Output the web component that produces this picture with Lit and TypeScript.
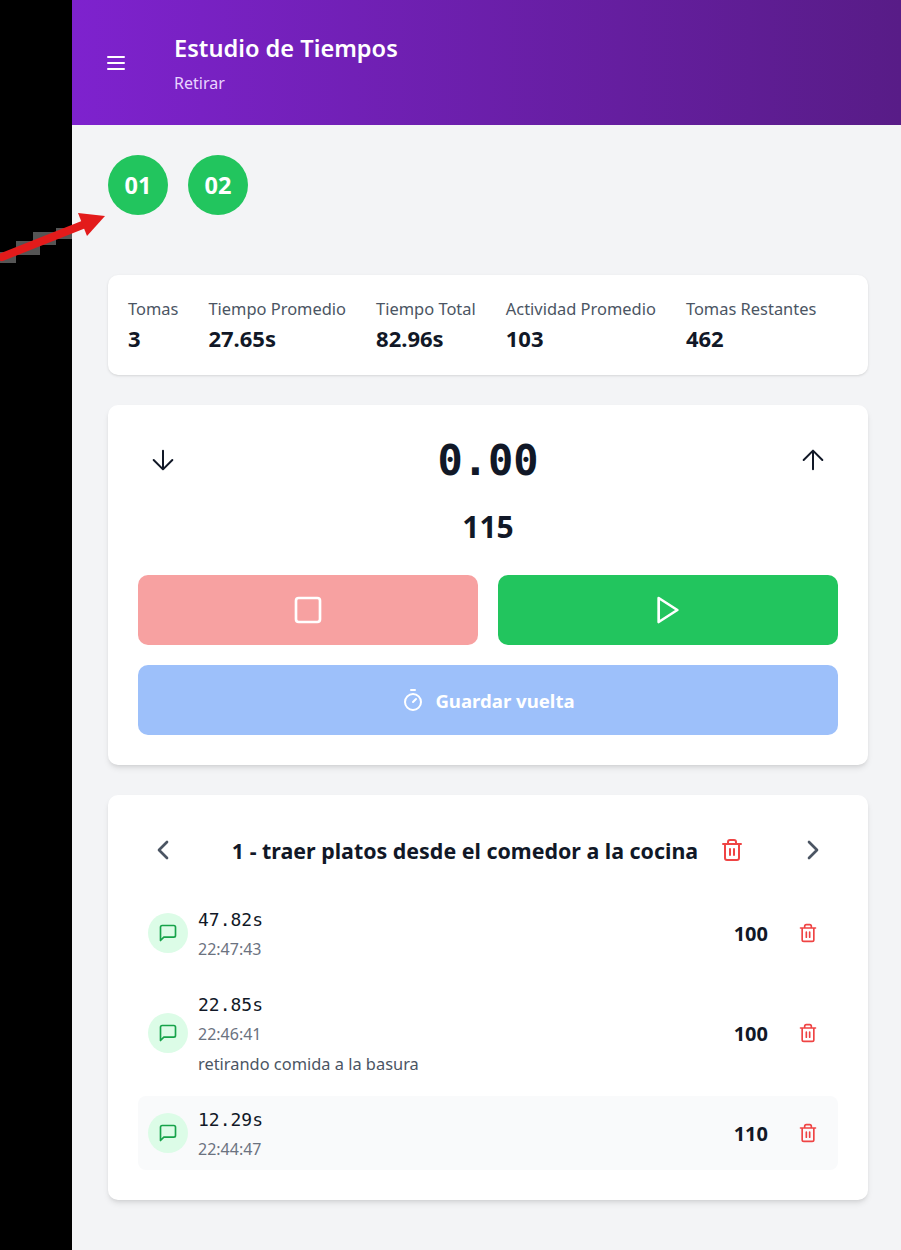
import { LitElement, css, html, svg } from 'lit'
import { customElement, state } from 'lit/decorators.js'

const icons = {
  menu: svg`<path d="M4 6h16M4 12h16M4 18h16" />`,
  down: svg`<path d="M12 5v14M19 12l-7 7-7-7" />`,
  up: svg`<path d="M12 19V5M5 12l7-7 7 7" />`,
  square: svg`<rect x="3" y="3" width="18" height="18" rx="2" />`,
  play: svg`<polygon points="5 3 19 12 5 21 5 3" />`,
  timer: svg`<path d="M10 2h4M12 14l3-3" /><circle cx="12" cy="14" r="8" />`,
  left: svg`<path d="M15 18l-6-6 6-6" />`,
  right: svg`<path d="M9 18l6-6-6-6" />`,
  trash: svg`<path d="M3 6h18M19 6v14c0 1-1 2-2 2H7c-1 0-2-1-2-2V6M8 6V4c0-1 1-2 2-2h4c1 0 2 1 2 2v2M10 11v6M14 11v6" />`,
  message: svg`<path d="M21 15a2 2 0 0 1-2 2H7l-4 4V5a2 2 0 0 1 2-2h14a2 2 0 0 1 2 2z" />`,
}

type IconName = keyof typeof icons

const icon = (name: IconName, size = 24, weight = 2) => html`
  <svg
    width="${size}"
    height="${size}"
    viewBox="0 0 24 24"
    fill="none"
    stroke="currentColor"
    stroke-width="${weight}"
    stroke-linecap="round"
    stroke-linejoin="round"
  >
    ${icons[name]}
  </svg>
`

const stats = [
  { label: 'Tomas', value: '3' },
  { label: 'Tiempo Promedio', value: '27.65s' },
  { label: 'Tiempo Total', value: '82.96s' },
  { label: 'Actividad Promedio', value: '103' },
  { label: 'Tomas Restantes', value: '462' },
]

const laps = [
  { time: '47.82s', clock: '22:47:43', note: '', activity: 100, shaded: false },
  { time: '22.85s', clock: '22:46:41', note: 'retirando comida a la basura', activity: 100, shaded: false },
  { time: '12.29s', clock: '22:44:47', note: '', activity: 110, shaded: true },
]

@customElement('app-root')
export class AppRoot extends LitElement {
  @state() elements = ['01', '02']

  render() {
    return html`
      <div class="shell">
        <div class="rail"></div>
        <div class="page">
          <header class="header">
            <button class="menu">${icon('menu')}</button>
            <div class="heading">
              <h1>Estudio de Tiempos</h1>
              <p>Retirar</p>
            </div>
          </header>

          <main class="content">
            <div class="circles">
              ${this.elements.map((el) => html`<button class="circle">${el}</button>`)}
            </div>

            <section class="card stats">
              ${stats.map(
                (s) => html`
                  <div>
                    <div class="stat-label">${s.label}</div>
                    <div class="stat-value">${s.value}</div>
                  </div>
                `,
              )}
            </section>

            <section class="card timer">
              <div class="timer-top">
                <button class="nav dark">${icon('down', 32, 1.5)}</button>
                <div class="clock">0.00</div>
                <button class="nav dark">${icon('up', 32, 1.5)}</button>
              </div>
              <div class="rating">115</div>
              <div class="actions">
                <button class="action stop">${icon('square', 32)}</button>
                <button class="action start">${icon('play', 32)}</button>
              </div>
              <button class="action save">${icon('timer')}<span>Guardar vuelta</span></button>
            </section>

            <section class="card laps">
              <div class="laps-top">
                <button class="nav">${icon('left', 32)}</button>
                <div class="title">
                  <h2>1 - traer platos desde el comedor a la cocina</h2>
                  <span class="red">${icon('trash')}</span>
                </div>
                <button class="nav">${icon('right', 32)}</button>
              </div>
              <div class="rows">
                ${laps.map(
                  (lap) => html`
                    <div class="row ${lap.shaded ? 'shaded' : ''}">
                      <div class="bubble">${icon('message', 20)}</div>
                      <div class="lap-text">
                        <div class="lap-time">${lap.time}</div>
                        <div class="lap-clock">${lap.clock}</div>
                        ${lap.note ? html`<div class="lap-note">${lap.note}</div>` : ''}
                      </div>
                      <div class="lap-activity">${lap.activity}</div>
                      <button class="lap-delete red">${icon('trash', 20)}</button>
                    </div>
                  `,
                )}
              </div>
            </section>
          </main>
        </div>

        <!-- annotation drawn over the screenshot -->
        <svg class="arrow" width="110" height="70" viewBox="0 0 110 70">
          <path d="M0 52H16V41H33V32H56V28H72V39H56V45H40V55H16V63H0Z" fill="#555" />
          <path d="M2 57L85 24" stroke="#e31b1b" stroke-width="8" stroke-linecap="round" fill="none" />
          <polygon points="78,13 105,16 87,36" fill="#e31b1b" />
        </svg>
      </div>
    `
  }

  static styles = css`
    :host {
      display: block;
      font-family: 'Noto Sans', sans-serif;
      color: #111827;
    }

    * {
      box-sizing: border-box;
    }

    h1,
    h2,
    p {
      margin: 0;
    }

    button {
      border: 0;
      padding: 0;
      background: none;
      color: inherit;
      font: inherit;
      display: flex;
      align-items: center;
      justify-content: center;
    }

    svg {
      display: block;
    }

    .shell {
      position: relative;
      display: grid;
      grid-template-columns: 72px 1fr;
      min-height: 1250px;
    }

    .rail {
      background: #000;
    }

    .page {
      background: #f3f4f6;
      min-width: 0;
    }

    .arrow {
      position: absolute;
      left: 0;
      top: 200px;
    }

    .header {
      height: 125px;
      display: flex;
      align-items: center;
      padding-left: 32px;
      color: #fff;
      background: linear-gradient(to right, #7e22ce, #581c87);
    }

    .menu {
      width: 24px;
      height: 24px;
      margin-right: 46px;
    }

    h1 {
      font-size: 23.6px;
      line-height: 36px;
      font-weight: 600;
    }

    .heading p {
      margin-top: 5px;
      font-size: 16px;
      line-height: 24px;
      color: #e9d5ff;
    }

    .content {
      padding: 30px 33px 50px 36px;
    }

    .circles {
      display: flex;
      gap: 20px;
      margin-bottom: 60px;
    }

    .circle {
      width: 60px;
      height: 60px;
      border-radius: 50%;
      background: #22c55e;
      color: #fff;
      font-size: 23.5px;
      font-weight: 700;
    }

    .card {
      background: #fff;
      border-radius: 10px;
    }

    .stats {
      display: flex;
      gap: 30px;
      padding: 20px 20px 22px;
      margin-bottom: 30px;
      box-shadow: 0 1px 3px rgb(0 0 0 / 0.1), 0 1px 2px -1px rgb(0 0 0 / 0.1);
    }

    .stat-label {
      font-size: 16.45px;
      line-height: 28px;
      color: #4b5563;
    }

    .stat-value {
      font-size: 22px;
      line-height: 30px;
      font-weight: 700;
    }

    .timer,
    .laps {
      padding: 30px;
      box-shadow: 0 4px 6px -1px rgb(0 0 0 / 0.1), 0 2px 4px -2px rgb(0 0 0 / 0.1);
    }

    .timer {
      margin-bottom: 30px;
    }

    .timer-top,
    .laps-top {
      display: flex;
      align-items: center;
      justify-content: space-between;
      height: 50px;
    }

    .nav {
      width: 50px;
      height: 50px;
      color: #4b5563;
    }

    .nav.dark {
      color: #111827;
    }

    .clock {
      font-family: 'DejaVu Sans Mono', monospace;
      font-size: 42px;
      font-weight: 700;
    }

    .rating {
      margin: 24px 0 30px;
      text-align: center;
      font-size: 30px;
      line-height: 36px;
      font-weight: 700;
    }

    .actions {
      display: grid;
      grid-template-columns: 1fr 1fr;
      gap: 20px;
      margin-bottom: 20px;
    }

    .action {
      height: 70px;
      width: 100%;
      border-radius: 10px;
      color: #fff;
    }

    .stop {
      background: #f7a1a1;
    }

    .start {
      background: #22c55e;
    }

    .save {
      gap: 10px;
      background: #9dc0fa;
      font-size: 18.6px;
      font-weight: 700;
    }

    .title {
      display: flex;
      align-items: center;
      gap: 22px;
    }

    h2 {
      margin-top: 2px;
      font-size: 21.4px;
      line-height: 30px;
      font-weight: 700;
    }

    .red {
      color: #ef4444;
    }

    .rows {
      display: flex;
      flex-direction: column;
      gap: 11px;
      margin-top: 21px;
    }

    .row {
      display: flex;
      align-items: center;
      padding: 10px;
      border-radius: 8px;
    }

    .row.shaded {
      background: #f9fafb;
    }

    .bubble {
      width: 40px;
      height: 40px;
      border-radius: 50%;
      display: flex;
      align-items: center;
      justify-content: center;
      background: #dcfce7;
      color: #16a34a;
      margin-right: 10px;
    }

    .lap-text {
      flex: 1;
    }

    .lap-time {
      font-family: 'DejaVu Sans Mono', monospace;
      font-size: 18px;
      line-height: 27px;
    }

    .lap-clock {
      margin: 4px 0 -1px;
      font-size: 16px;
      line-height: 24px;
      color: #6b7280;
    }

    .lap-note {
      margin: 7px 0 -1px;
      font-size: 16.4px;
      line-height: 24px;
      color: #4b5563;
    }

    .lap-activity {
      font-size: 20px;
      font-weight: 700;
      margin-right: 20px;
    }

    .lap-delete {
      width: 40px;
      height: 40px;
    }
  `
}

declare global {
  interface HTMLElementTagNameMap {
    'app-root': AppRoot
  }
}
